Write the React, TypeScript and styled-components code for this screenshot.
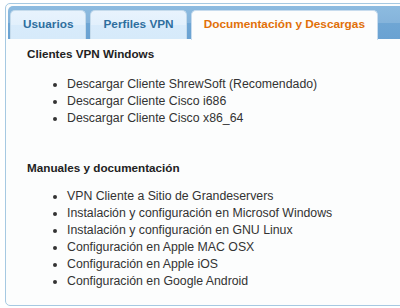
import React from "react";
import styled, { createGlobalStyle } from "styled-components";

const Global = createGlobalStyle`
  html, body { margin: 0; padding: 0; background: #ffffff; }
  body { font-family: "Liberation Sans", Arial, sans-serif; overflow: hidden; }
  #root { width: 400px; height: 308px; overflow: hidden; }
`;

const Page = styled.div`
  padding: 3px 0 0 5px;
`;

const Widget = styled.div`
  width: 430px;
  border: 1px solid #a6c9e2;
  border-radius: 5px;
  background: #fcfdfd;
  padding: 2px;
  color: #222222;
  font-size: 12px;
`;

const Nav = styled.ul`
  list-style: none;
  margin: 0;
  padding: 4px 2px 0 2px;
  display: flex;
  gap: 4px;
  border-radius: 5px 5px 0 0;
  background: linear-gradient(#8dbbe0 0%, #85b4db 50%, #6fa6d4 51%, #6aa2d2 100%);
`;

const Tab = styled.li<{ $active?: boolean }>`
  border: 1px solid ${(p) => (p.$active ? "#c8dcee" : "#c5dbec")};
  border-bottom: 0;
  border-radius: 5px 5px 0 0;
  padding: 6px 12px 8px;
  margin-bottom: ${(p) => (p.$active ? "-1px" : "0")};
  font-weight: bold;
  font-size: 11.8px;
  line-height: 14px;
  white-space: nowrap;
  color: ${(p) => (p.$active ? "#e17009" : "#2e6e9e")};
  background: ${(p) =>
    p.$active
      ? "#fcfdfd"
      : "linear-gradient(#e8f3fd 0%, #e2f0fc 50%, #d8ebfb 51%, #d6eafa 100%)"};
`;

const Content = styled.div`
  box-sizing: border-box;
  height: 264px;
  padding: 8px 19px 10px;
`;

const Heading = styled.h3<{ $space: number }>`
  margin: 0 0 ${(p) => p.$space}px;
  font-size: 11.7px;
  line-height: 14px;
  font-weight: bold;
  color: #222222;
`;

const List = styled.ul`
  margin: 0;
  padding: 0 0 0 40px;
  list-style: disc;
  font-size: 12.3px;
  line-height: 17px;
  color: #333333;
`;

const Section = styled.section<{ $gap?: number }>`
  margin-top: ${(p) => p.$gap ?? 0}px;
`;

export default function App() {
  const clientes = [
    "Descargar Cliente ShrewSoft (Recomendado)",
    "Descargar Cliente Cisco i686",
    "Descargar Cliente Cisco x86_64",
  ];
  const manuales = [
    "VPN Cliente a Sitio de Grandeservers",
    "Instalación y configuración en Microsof Windows",
    "Instalación y configuración en GNU Linux",
    "Configuración en Apple MAC OSX",
    "Configuración en Apple iOS",
    "Configuración en Google Android",
  ];
  return (
    <Page>
      <Global />
      <Widget>
        <Nav>
          <Tab>Usuarios</Tab>
          <Tab>Perfiles VPN</Tab>
          <Tab $active>Documentación y Descargas</Tab>
        </Nav>
        <Content>
          <Section>
            <Heading $space={15}>Clientes VPN Windows</Heading>
            <List>
              {clientes.map((c) => (
                <li key={c}>{c}</li>
              ))}
            </List>
          </Section>
          <Section $gap={34}>
            <Heading $space={13}>Manuales y documentación</Heading>
            <List>
              {manuales.map((c) => (
                <li key={c}>{c}</li>
              ))}
            </List>
          </Section>
        </Content>
      </Widget>
    </Page>
  );
}
